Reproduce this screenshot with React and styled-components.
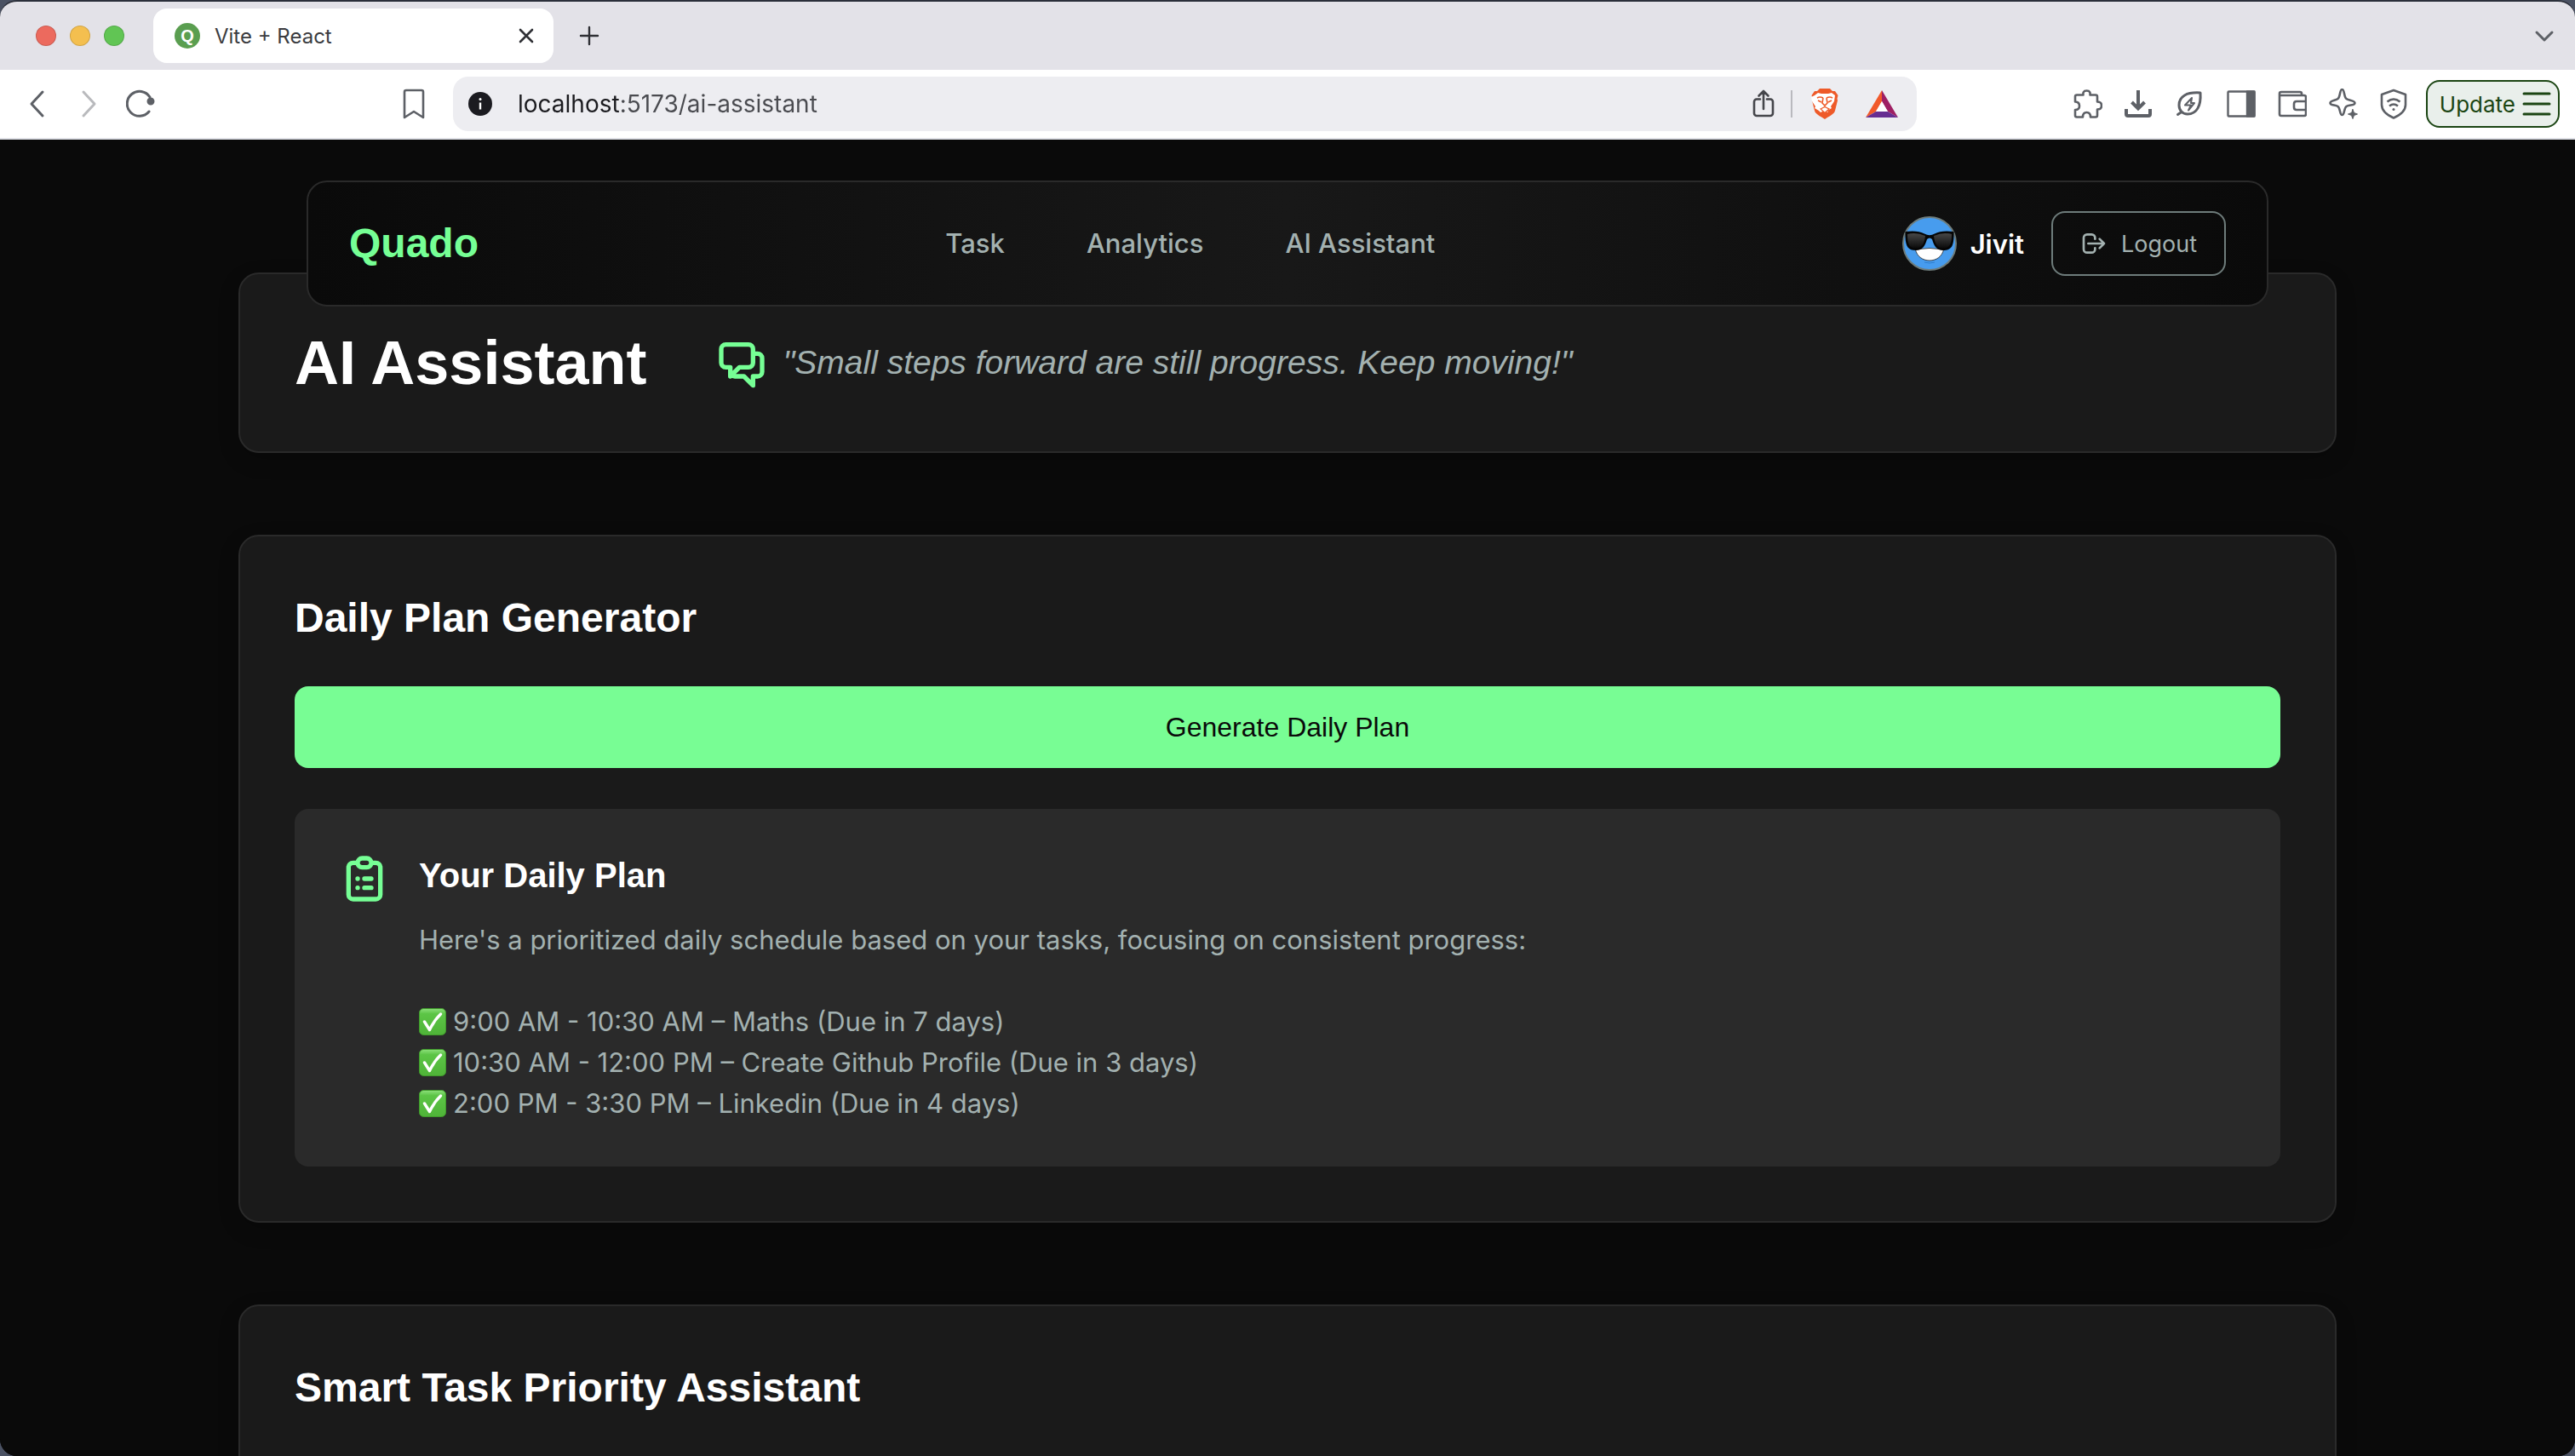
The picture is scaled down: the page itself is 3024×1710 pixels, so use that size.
import React from "react";
import styled, { createGlobalStyle } from "styled-components";
import { HiOutlineChatAlt2, HiOutlineClipboardList, HiOutlineLogout } from "react-icons/hi";

const sans = `Inter, "Liberation Sans", sans-serif`;
const display = `"Liberation Sans", Arial, sans-serif`;

const Global = createGlobalStyle`
  * { box-sizing: border-box; }
  html, body, #root { height: 100%; }
  body { margin: 0; background: #4b5263; font-family: ${sans}; overflow: hidden; }
  button, input { font: inherit; }
  h1, h2, h3, p, ul { margin: 0; padding: 0; }
`;

const Window = styled.div`
  height: 100vh;
  display: flex;
  flex-direction: column;
  border-top: 2px solid #2b2f3a;
  border-radius: 20px;
  overflow: hidden;
  background: #0a0a0a;
`;

const TabStrip = styled.div`
  display: flex;
  align-items: center;
  height: 80px;
  padding: 0 20px 0 42px;
  background: #e3e2e8;
`;

const Lights = styled.div`
  display: flex;
  gap: 16px;
  margin-right: 34px;
`;

const Light = styled.span`
  width: 24px;
  height: 24px;
  border-radius: 50%;
  border: 1px solid rgba(0, 0, 0, 0.14);
  background: ${(p) => p.$color};
`;

const Tab = styled.div`
  display: flex;
  align-items: center;
  gap: 17px;
  width: 470px;
  height: 64px;
  padding: 0 16px 0 25px;
  border-radius: 16px;
  background: #fff;
  color: #3b3c40;
  font-size: 24px;
`;

const Favicon = styled.span`
  display: grid;
  place-items: center;
  width: 30px;
  height: 30px;
  border-radius: 50%;
  background: #5a9e50;
  color: #fff;
  font: 700 20px/30px ${display};
`;

const TabTitle = styled.span`
  flex: 1;
`;

const IconButton = styled.button`
  display: grid;
  place-items: center;
  width: ${(p) => (p.$wide ? 38 : 32)}px;
  height: 40px;
  padding: 0;
  border: 0;
  background: none;
  color: ${(p) => p.$color || "#5d6066"};
`;

const NewTab = styled(IconButton)`
  margin-left: 26px;
  margin-right: auto;
`;

const Toolbar = styled.div`
  display: flex;
  align-items: center;
  height: 82px;
  padding: 0 18px 0 28px;
  border-bottom: 2px solid #dfe0e6;
  background: #fff;
`;

const History = styled.div`
  display: flex;
  gap: 28px;
  margin-right: 290px;
`;

const Address = styled.div`
  flex: 1;
  display: flex;
  align-items: center;
  height: 64px;
  margin-left: 30px;
  padding: 0 22px 0 18px;
  border-radius: 18px;
  background: #ededf1;
`;

const UrlInput = styled.input`
  flex: 1;
  min-width: 0;
  height: 40px;
  margin-left: 30px;
  padding: 0;
  border: 0;
  outline: 0;
  background: linear-gradient(90deg, #1b1b1f 119px, #4a4b50 119px);
  background-clip: text;
  -webkit-background-clip: text;
  color: transparent;
  font-size: 28px;
`;

const AddressActions = styled.div`
  display: flex;
  align-items: center;
`;

const Divider = styled.span`
  width: 2px;
  height: 32px;
  margin: 0 22px 0 16px;
  background: #b9b9be;
`;

const Badges = styled.div`
  display: flex;
  gap: 32px;
`;

const Extensions = styled.div`
  display: flex;
  gap: 28px;
  margin: 0 22px 0 184px;
`;

const Update = styled.button`
  display: flex;
  align-items: center;
  gap: 8px;
  height: 56px;
  padding: 0 8px 0 14px;
  border: 2px solid #1b4513;
  border-radius: 16px;
  background: #e9efeb;
  color: #1b4513;
  font-size: 26px;
`;

const Viewport = styled.div`
  position: relative;
  flex: 1;
  min-height: 0;
  overflow: hidden;
  background: #0a0a0a;
`;

const Navbar = styled.header`
  position: absolute;
  z-index: 2;
  top: 48px;
  left: 360px;
  right: 360px;
  display: flex;
  align-items: center;
  justify-content: space-between;
  padding: 34px 48px;
  border: 2px solid #2a2a2a;
  border-radius: 24px;
  background: linear-gradient(90deg, #0a0a0a, #181818 50%, #0a0a0a);
`;

const Brand = styled.a`
  color: #76ff95;
  font: 700 48px/64px ${display};
  text-decoration: none;
`;

const NavLinks = styled.nav`
  display: flex;
  gap: 96px;
`;

const NavLink = styled.a`
  color: #a3b1b0;
  font-size: 31px;
  font-weight: 500;
  line-height: 48px;
  text-decoration: none;
`;

const Account = styled.div`
  display: flex;
  align-items: center;
  gap: 16px;
`;

const UserName = styled.span`
  margin-right: 16px;
  color: #fff;
  font-size: 31px;
  font-weight: 600;
`;

const Logout = styled.button`
  display: flex;
  align-items: center;
  gap: 16px;
  height: 76px;
  padding: 0 32px;
  border: 2px solid #6e7c7b;
  border-radius: 16px;
  background: transparent;
  color: #a3b1b0;
  font-size: 27px;
`;

const Page = styled.main`
  display: flex;
  flex-direction: column;
  gap: 96px;
  padding: 156px 280px 96px;
`;

const Card = styled.section`
  padding: 64px;
  border: 2px solid #2a2a2a;
  border-radius: 24px;
  background: #1a1a1a;
  box-shadow: 0 8px 24px rgba(0, 0, 0, 0.2);
`;

const TitleCard = styled(Card)`
  display: flex;
  align-items: center;
  gap: 80px;
`;

const Title = styled.h1`
  color: #fff;
  font: 700 72px/80px ${display};
`;

const Quote = styled.p`
  display: flex;
  align-items: center;
  gap: 16px;
  color: #a3b1b0;
  font: italic 400 39px/56px ${display};

  svg { color: #76ff95; }
`;

const Heading = styled.h2`
  margin-bottom: 48px;
  color: #fff;
  font: 700 48px/64px ${display};
`;

const Generate = styled.button`
  display: block;
  width: 100%;
  height: 96px;
  margin-bottom: 48px;
  border: 0;
  border-radius: 16px;
  background: #78fd94;
  color: #0a0a0a;
  font: 400 32px/48px ${display};
`;

const Plan = styled.article`
  display: flex;
  align-items: flex-start;
  gap: 32px;
  padding: 50px;
  border-radius: 16px;
  background: #2a2a2a;

  > svg { flex: none; color: #76ff95; }
`;

const PlanTitle = styled.h3`
  margin-bottom: 24px;
  color: #fff;
  font: 700 40px/56px ${display};
`;

const PlanText = styled.p`
  color: #a3b1b0;
  font-size: 31px;
  line-height: 48px;
`;

const Schedule = styled.ul`
  margin-top: 48px;
  list-style: none;
`;

const Slot = styled.li`
  display: flex;
  align-items: center;
  gap: 8px;
  color: #a3b1b0;
  font-size: 31px;
  line-height: 48px;
`;

const Svg = ({ w = 32, h = 36, sw = 3, children }) => (
  <svg width={w} height={h} viewBox={`0 0 ${w} ${h}`} fill="none" stroke="currentColor"
    strokeWidth={sw} strokeLinecap="round" strokeLinejoin="round" aria-hidden="true">
    {children}
  </svg>
);

const Check = () => (
  <svg width="32" height="32" viewBox="0 0 32 32" aria-hidden="true">
    <defs>
      <linearGradient id="check" x1="0" y1="0" x2="0" y2="1">
        <stop offset="0" stopColor="#8ee07c" />
        <stop offset="0.2" stopColor="#5cc546" />
        <stop offset="1" stopColor="#4fb338" />
      </linearGradient>
    </defs>
    <rect x="0.5" y="0.5" width="31" height="31" rx="5" fill="url(#check)" stroke="#3f9a2b" />
    <path d="M6.500 16L12.500 25.500Q18 14 25.500 7" fill="none" stroke="#fff" strokeWidth="3.400" strokeLinecap="round" strokeLinejoin="round" />
  </svg>
);

const Avatar = () => (
  <svg width="64" height="64" viewBox="0 0 64 64" role="img" aria-label="Jivit">
    <defs>
      <linearGradient id="lens" x1="0" y1="0" x2="0" y2="1">
        <stop offset="0" stopColor="#484848" />
        <stop offset="1" stopColor="#0a0a0a" />
      </linearGradient>
    </defs>
    <circle cx="32" cy="32" r="31" fill="#479cee" stroke="#6e7c7b" strokeWidth="2" />
    <path d="M15.500 39Q32 36 48.500 39C47 47 40 52 32 52S17 47 15.500 39z" fill="#fff" stroke="#222" strokeWidth="0.800" />
    <path d="M26 54Q32 56 38 54" fill="none" stroke="#2f7fcf" strokeWidth="1" />
    <path d="M3.500 18Q18 16 26 20.500Q32 24 38 20.500Q46 16 60.500 18V24C60 36 57 40 48 40C40 40 37 34 35 27Q32 24 29 27C27 34 24 40 16 40C7 40 4 36 3.500 24z" fill="#050505" />
    <path d="M6 21Q16 18 27 23C26 33 22 37.500 16 37.500C8 37.500 6 32 6 21zM58 21Q48 18 37 23C38 33 42 37.500 48 37.500C56 37.500 58 32 58 21z" fill="url(#lens)" />
  </svg>
);

const slots = [
  "9:00 AM - 10:30 AM – Maths (Due in 7 days)",
  "10:30 AM - 12:00 PM – Create Github Profile (Due in 3 days)",
  "2:00 PM - 3:30 PM – Linkedin (Due in 4 days)",
];

const extensions = [
  ["Extensions", <Svg w={34} sw={2.6}><path d="M4 7.500h7.500c0-1-1-5 4-5s4 4 4 5H26q2 0 2 2v6c2 0 5 0 5 4.500s-3 4.500-5 4.500v7q0 2-2 2h-6c0-3-1-5.500-4.500-5.500S11 30.500 11 33.500H4q-2 0-2-2v-6.500c3 0 5-1 5-4.500s-2-5-5-5v-6q0-2 2-2z" /></Svg>],
  ["Downloads", <Svg sw={4}><path d="M16 2v20M8.500 16l7.500 7.500 7.500-7.500M2 24v6q0 2 2 2h24q2 0 2-2v-6" strokeLinecap="butt" strokeLinejoin="miter" /></Svg>],
  ["Energy saver", <Svg><path d="M29 5C13 4 4 9 4 19.500c0 6 4 10.500 10 10.500C25 30 30 20 29 5zM7 27.500l-4.500 3" /><path d="M19 11l-8 8.500h4M15 25.500l7-8.500h-4l1-6M15 19.500h3L15 25.500" strokeWidth="2" /></Svg>],
  ["Sidebar", <Svg w={34} sw={2.4}><rect x="1.500" y="3.500" width="31" height="29" rx="1" /><path d="M24 3.500h8.500v29H24z" fill="currentColor" /></Svg>],
  ["Wallet", <Svg w={34} sw={2.6}><path d="M28 8V6q0-2-2-2H4Q2 4 2 6v24q0 2 2 2h27q2 0 2-2V10q0-2-2-2H2" /><path d="M33 15H22q-3 0-3 3v4q0 3 3 3h11" /></Svg>],
  ["Leo AI", <Svg w={34} sw={2.6}><path d="M15.500 3c3 0 2 9 5 11s10 2 10 5-7 2-10 4-2 10-5 10-2-8-5-10-9-1-9-4 6-3 9-5 2-11 5-11z" transform="translate(0 -2)" /><path d="M28 24.500l1.500 4L33.500 30l-4 1.500-1.500 4-1.500-4-4-1.500 4-1.500z" fill="currentColor" strokeWidth="1" /></Svg>],
  ["VPN", <Svg sw={2.6}><path d="M16 2L30 7v12c0 7-6 12-14 15.500C8 31 2 26 2 19V7z" /><path d="M8.500 15.500q7.500-6 15 0M11 20.500q5-4 10 0" strokeLinecap="butt" /><circle cx="16" cy="24.500" r="1.500" fill="currentColor" stroke="none" /></Svg>],
];

export default function App() {
  return (
    <Window>
      <Global />
      <TabStrip>
        <Lights>
          <Light $color="#ec6a5e" />
          <Light $color="#f4bf4f" />
          <Light $color="#61c554" />
        </Lights>
        <Tab>
          <Favicon>Q</Favicon>
          <TabTitle>Vite + React</TabTitle>
          <IconButton aria-label="Close tab" $color="#2f3035">
            <Svg w={20} h={20} sw={2.6}><path d="M3 3l14 14M17 3L3 17" /></Svg>
          </IconButton>
        </Tab>
        <NewTab aria-label="New tab" $color="#2f3035">
          <Svg w={24} h={24} sw={2.4}><path d="M12 2v20M2 12h20" /></Svg>
        </NewTab>
        <IconButton aria-label="Search tabs">
          <Svg w={24} h={24}><path d="M3 8l9 9 9-9" /></Svg>
        </IconButton>
      </TabStrip>
      <Toolbar>
        <History>
          <IconButton aria-label="Back"><Svg><path d="M22 4L9 18l13 14" /></Svg></IconButton>
          <IconButton aria-label="Forward" $color="#b9babd"><Svg><path d="M10 4l13 14-13 14" /></Svg></IconButton>
          <IconButton aria-label="Reload">
            <Svg w={34}><path d="M27 27A14.500 14.500 0 1 1 28 10" /><circle cx="29" cy="15" r="3" fill="currentColor" /></Svg>
          </IconButton>
        </History>
        <IconButton aria-label="Bookmark"><Svg sw={2.6}><path d="M5 4q0-2 2-2h18q2 0 2 2v30l-11-7-11 7z" /></Svg></IconButton>
        <Address>
          <svg width="28" height="28" viewBox="0 0 28 28" aria-hidden="true">
            <circle cx="14" cy="14" r="14" fill="#1b1b20" />
            <path d="M14 12.500v8" stroke="#fff" strokeWidth="2.400" />
            <circle cx="14" cy="8.500" r="1.500" fill="#fff" />
          </svg>
          <UrlInput aria-label="Address" defaultValue="localhost:5173/ai-assistant" />
          <AddressActions>
            <IconButton aria-label="Share" $color="#45464b">
              <Svg sw={2.6}><path d="M12 12.500H8a3 3 0 0 0-3 3V29a3 3 0 0 0 3 3h16a3 3 0 0 0 3-3V15.500a3 3 0 0 0-3-3h-4M16 24V4M10.500 8.500L16 3l5.500 5.500" /></Svg>
            </IconButton>
            <Divider />
            <Badges>
              <IconButton aria-label="Brave Shields">
                <svg width="32" height="36" viewBox="0 0 32 36">
                  <path d="M10 0h12l3 3h3l3.500 5-1 4 .5 2-3 12c-1 4-6 6-12 10C10 32 5 30 4 26L1 14l.5-2-1-4L4 3h3z" fill="#ee5a29" />
                  <path d="M4 8l4-3 4 1h8l4-1 4 3-1 7-4 6 1 2-5 3 1 2-5-2-4 2-2-2-5-3 1-2-4-6-1-5z" fill="#fff" />
                  <path d="M11 24l5-2.500 5 2.500-5 4.500z" fill="#fff" stroke="#ee5a29" strokeWidth="1.200" />
                  <path d="M7 11q3-2 7 0M25 11q-3-2-7 0M8 14l4 2M24 14l-4 2M14 11l-1 6 3 3 3-3-1-6" fill="none" stroke="#ee5a29" strokeWidth="1.600" />
                </svg>
              </IconButton>
              <IconButton aria-label="Brave Rewards" $wide>
                <svg width="38" height="32" viewBox="0 0 38 32">
                  <path d="M19 0L0 32l12-7 7-12z" fill="#f1592a" />
                  <path d="M19 0l19 32-12-7-7-12z" fill="#9e1f63" />
                  <path d="M0 32h38l-12-7H12z" fill="#662d91" />
                  <path d="M19 13l7 12H12z" fill="#fff" />
                </svg>
              </IconButton>
            </Badges>
          </AddressActions>
        </Address>
        <Extensions>
          {extensions.map(([label, icon]) => (
            <IconButton key={label} aria-label={label}>{icon}</IconButton>
          ))}
        </Extensions>
        <Update>
          Update
          <Svg w={34} h={32}><path d="M2 4h30M2 16h30M2 28h30" /></Svg>
        </Update>
      </Toolbar>
      <Viewport>
        <Navbar>
          <Brand href="#home">Quado</Brand>
          <NavLinks>
            <NavLink href="#task">Task</NavLink>
            <NavLink href="#analytics">Analytics</NavLink>
            <NavLink href="#ai-assistant">AI Assistant</NavLink>
          </NavLinks>
          <Account>
            <Avatar />
            <UserName>Jivit</UserName>
            <Logout><HiOutlineLogout size={32} />Logout</Logout>
          </Account>
        </Navbar>
        <Page>
          <TitleCard>
            <Title>AI Assistant</Title>
            <Quote><HiOutlineChatAlt2 size={64} />"Small steps forward are still progress. Keep moving!"</Quote>
          </TitleCard>
          <Card>
            <Heading>Daily Plan Generator</Heading>
            <Generate>Generate Daily Plan</Generate>
            <Plan>
              <HiOutlineClipboardList size={64} />
              <div>
                <PlanTitle>Your Daily Plan</PlanTitle>
                <PlanText>Here's a prioritized daily schedule based on your tasks, focusing on consistent progress:</PlanText>
                <Schedule>
                  {slots.map((slot) => (
                    <Slot key={slot}><Check />{slot}</Slot>
                  ))}
                </Schedule>
              </div>
            </Plan>
          </Card>
          <Card>
            <Heading>Smart Task Priority Assistant</Heading>
          </Card>
        </Page>
      </Viewport>
    </Window>
  );
}
